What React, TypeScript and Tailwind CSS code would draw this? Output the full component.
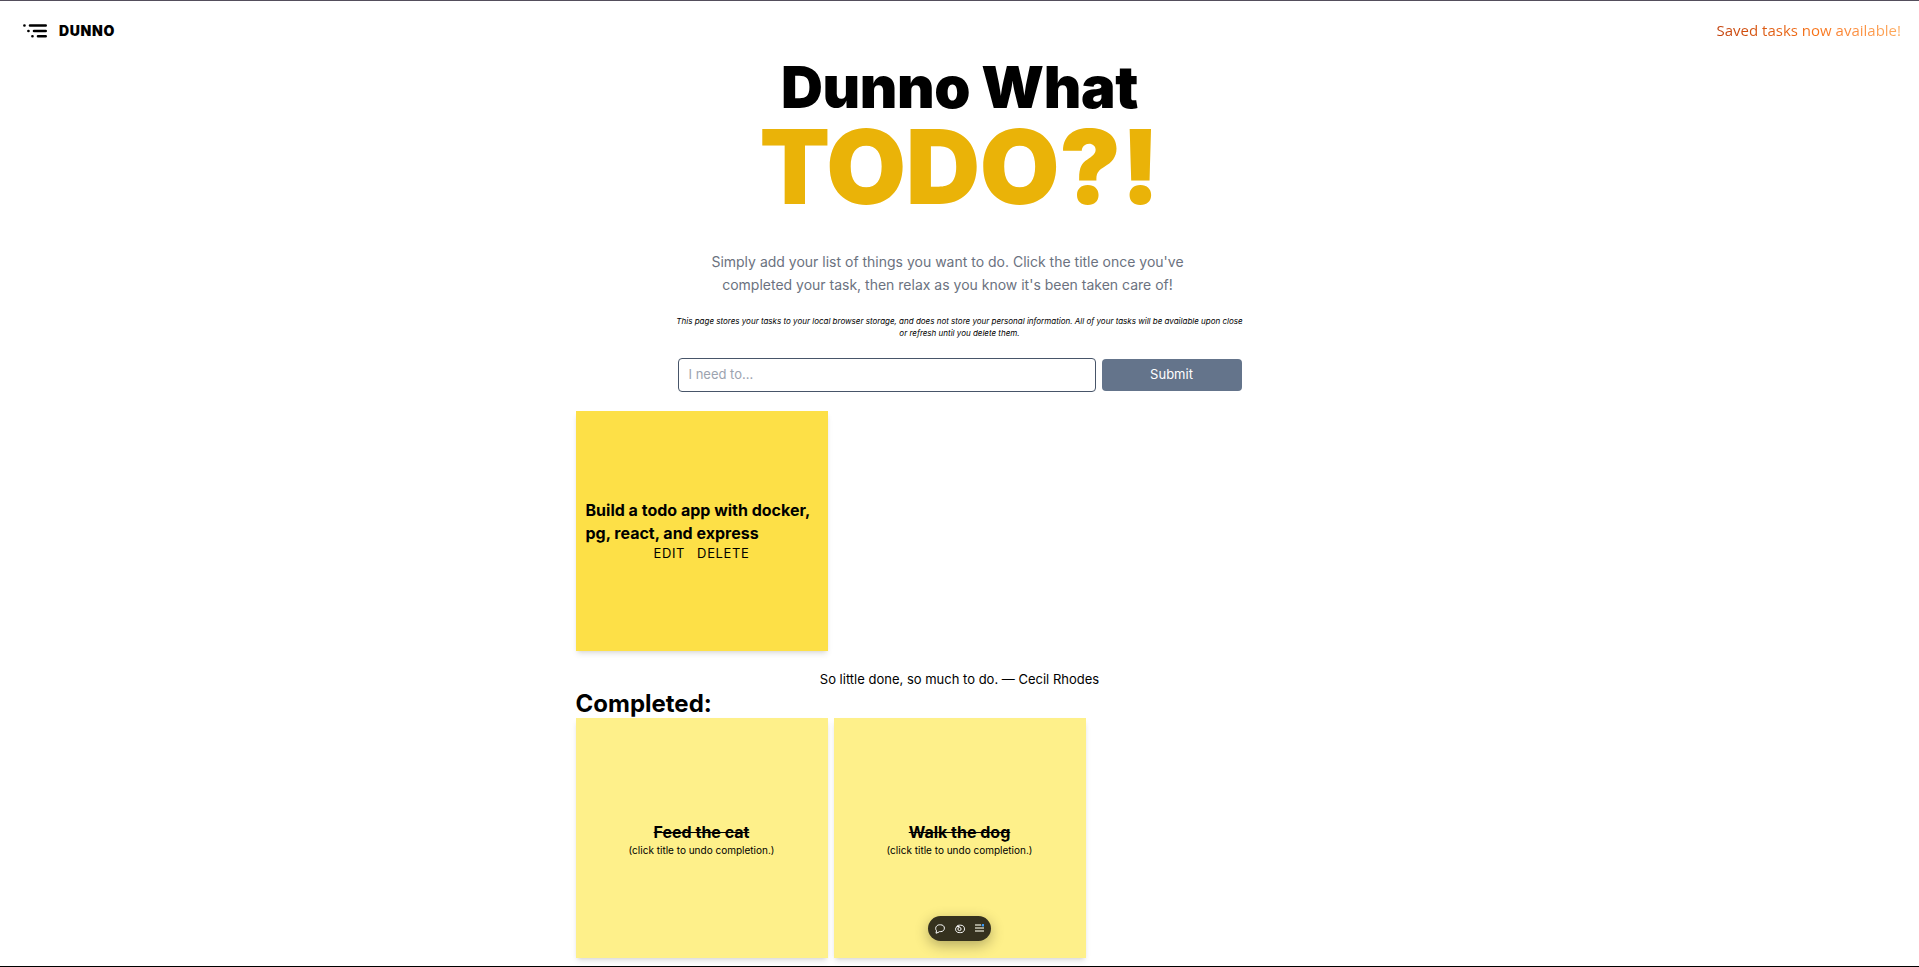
import { useState, type FormEvent } from "react";

function Logo() {
  return (
    <svg viewBox="0 0 24 14" className="h-[14px] w-6" fill="none" stroke="currentColor" strokeWidth="2.6" strokeLinecap="round" aria-hidden="true">
      <path d="M7 1.5H22.7M11 7H22.7M15 12.3H22.7" />
      <path d="M1.4 1.5h.1M5.4 7h.1M9.4 12.3h.1" />
    </svg>
  );
}

function CommentIcon() {
  return (
    <svg viewBox="0 0 10 10" className="size-[10px]" fill="none" stroke="currentColor" strokeWidth="1" strokeLinejoin="round" aria-hidden="true">
      <path d="M1 9.200 1.500 6.800C.3 5.300.5 3.300 1.500 2.200 2.300 1.200 3.400.800 4.600.800h1c2.200 0 3.800 1.400 3.800 3.300S8 7.600 5.800 7.600H4.600C3.600 8.200 2.500 8.900 1 9.200Z" />
    </svg>
  );
}

function EyeIcon() {
  return (
    <svg viewBox="0 0 10 10" className="size-[10px]" fill="none" stroke="currentColor" strokeWidth="1" aria-hidden="true">
      <path d="M1.500 2.500C2.500 1.300 3.500 1.200 4.700 1.200h1c2.300 0 3.800 1.500 3.800 3.700S8 8.600 5.700 8.600H4.200C2 8.600.6 7.200.6 5.200" />
      <circle cx="4.500" cy="5" r="1.600" />
      <path d="M.6 5.200C.6 3.600 1.500 2.500 3 2.500h1.500" />
    </svg>
  );
}

function MenuIcon() {
  return (
    <svg viewBox="0 0 9 9" className="size-[9px]" aria-hidden="true">
      <path d="M0 0h6v2H0zM0 3h9v2H0zM0 6h9v2H0z" fill="#a3a18f" />
      <circle cx="8" cy="1.200" r="1.300" fill="#3b9dff" />
    </svg>
  );
}

const completed = ["Feed the cat", "Walk the dog"];

export default function App() {
  const [task, setTask] = useState("");
  const submit = (e: FormEvent) => e.preventDefault();

  return (
    <div className="flex min-h-screen flex-col border-t border-b border-t-[#534e5c] border-b-black bg-white font-['Inter',sans-serif] text-black">
      <header className="flex h-[59px] items-center justify-between pr-[18px] pl-[23px]">
        <a href="#" className="flex items-center gap-3">
          <Logo />
          <span className="text-sm font-black tracking-wider">DUNNO</span>
        </a>
        <p className="bg-gradient-to-r from-[#c2410c] via-[#f97316] via-55% to-[#fdac60] bg-clip-text pb-px font-['Open_Sans',sans-serif] text-[15px] text-transparent">
          Saved tasks now available!
        </p>
      </header>

      <main className="mx-auto flex w-full max-w-3xl flex-col">
        <section className="mx-auto flex w-full max-w-[564px] flex-col items-center text-center">
          <h1 className="flex flex-col font-black tracking-tight">
            <span className="text-[58px] leading-[54px]">Dunno What</span>
            <span className="text-[103px] leading-[106px] text-[#eab308]">TODO?!</span>
          </h1>
          <p className="mt-[30px] max-w-[512px] pr-6 text-sm leading-[23px] text-[#6b7280]">
            Simply add your list of things you want to do. Click the title once you've completed your task, then relax as you know it's been taken care of!
          </p>
          <p className="-mx-1 mt-[19px] text-[8px] leading-3 italic">
            This page stores your tasks to your local browser storage, and does not store your personal information. All of your tasks will be available upon close or refresh until you delete them.
          </p>
          <form onSubmit={submit} className="mt-[19px] flex w-full items-center gap-1.5">
            <input
              aria-label="New task"
              placeholder="I need to..."
              value={task}
              onChange={(e) => setTask(e.target.value)}
              className="h-[34px] min-w-0 flex-1 rounded border border-[#475569] px-2.5 pb-0.5 text-[13px] outline-none placeholder:text-[#9ca3af]"
            />
            <button type="submit" className="h-8 w-[140px] rounded bg-[#64748b] text-[13px] text-white">
              Submit
            </button>
          </form>
        </section>

        <section aria-label="Tasks" className="mt-[19px] grid grid-cols-3 gap-1.5">
          <article className="flex h-60 flex-col justify-center bg-[#fde047] px-2.5 pb-0.5 shadow-md">
            <h2 className="text-base leading-[23px] font-bold">Build a todo app with docker, pg, react, and express</h2>
            <div className="flex justify-center gap-3 text-[13px] leading-4 tracking-wider">
              <button type="button">EDIT</button>
              <button type="button">DELETE</button>
            </div>
          </article>
        </section>

        <p className="mt-[19px] pb-px text-center text-[13px] leading-[18px]">So little done, so much to do. — Cecil Rhodes</p>

        <section>
          <h2 className="text-2xl leading-[29px] font-bold">Completed:</h2>
          <div className="grid grid-cols-3 gap-1.5">
            {completed.map((title) => (
              <article key={title} className="flex h-60 flex-col items-center justify-center bg-[#fef08a] shadow-md">
                <button type="button" className="text-base leading-[23px] font-bold line-through">{title}</button>
                <p className="text-[10px] leading-3">(click title to undo completion.)</p>
              </article>
            ))}
          </div>
        </section>
      </main>

      <div role="toolbar" aria-label="Page tools" className="fixed inset-x-0 bottom-[26px] mx-auto flex h-[25px] w-[63px] items-center justify-center gap-2.5 rounded-full bg-[#35311e] text-white shadow-[0_4px_14px_rgba(0,0,0,0.3)]">
        <button type="button" aria-label="Comments"><CommentIcon /></button>
        <button type="button" aria-label="View"><EyeIcon /></button>
        <button type="button" aria-label="Menu"><MenuIcon /></button>
      </div>
    </div>
  );
}
